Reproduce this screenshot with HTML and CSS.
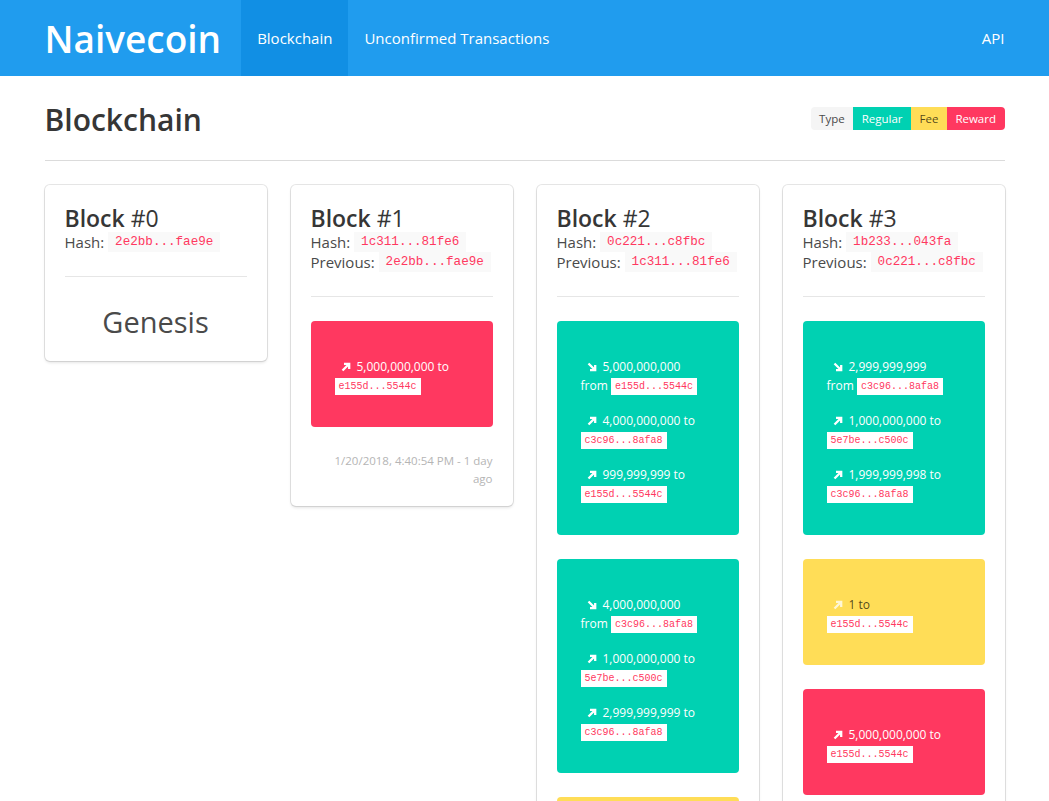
FILE: index.html
```html
<!DOCTYPE html>
<html lang="en">
<head>
<meta charset="utf-8">
<title>Naivecoin</title>
<link rel="stylesheet" href="styles.css">
</head>
<body>
<nav class="navbar">
  <div class="container nav-inner">
    <a class="brand">Naivecoin</a>
    <a class="nav-item active">Blockchain</a>
    <a class="nav-item">Unconfirmed Transactions</a>
    <a class="nav-item nav-end">API</a>
  </div>
</nav>

<main class="container">
  <div class="page-head">
    <h1 class="page-title">Blockchain</h1>
    <div class="tags">
      <span class="tag tag-type">Type</span>
      <span class="tag tag-regular">Regular</span>
      <span class="tag tag-fee">Fee</span>
      <span class="tag tag-reward">Reward</span>
    </div>
  </div>
  <hr class="page-rule">

  <div class="chain">
    <!-- Block 0 -->
    <div class="card">
      <h2 class="block-title">Block <span class="num">#0</span></h2>
      <div class="meta">Hash: <code class="hash">2e2bb...fae9e</code></div>
      <hr class="card-rule">
      <div class="genesis">Genesis</div>
    </div>

    <!-- Block 1 -->
    <div class="card">
      <h2 class="block-title">Block <span class="num">#1</span></h2>
      <div class="meta">Hash: <code class="hash">1c311...81fe6</code></div>
      <div class="meta">Previous: <code class="hash">2e2bb...fae9e</code></div>
      <hr class="card-rule">
      <div class="tx-box reward">
        <div class="tx">
          <div class="tx-line"><svg class="arrow" viewBox="0 0 10 10"><path d="M1.5 8.5 7.5 2.5M3 1.8H8.2V7"/></svg>5,000,000,000 to</div>
          <div class="tx-line"><code class="addr">e155d...5544c</code></div>
        </div>
      </div>
      <div class="stamp">1/20/2018, 4:40:54 PM - 1 day<br>ago</div>
    </div>

    <!-- Block 2 -->
    <div class="card">
      <h2 class="block-title">Block <span class="num">#2</span></h2>
      <div class="meta">Hash: <code class="hash">0c221...c8fbc</code></div>
      <div class="meta">Previous: <code class="hash">1c311...81fe6</code></div>
      <hr class="card-rule">
      <div class="tx-box regular">
        <div class="tx">
          <div class="tx-line"><svg class="arrow" viewBox="0 0 10 10"><path d="M1.5 1.5 7.5 7.5M8.2 3V8.2H3"/></svg>5,000,000,000</div>
          <div class="tx-line">from <code class="addr">e155d...5544c</code></div>
        </div>
        <div class="tx">
          <div class="tx-line"><svg class="arrow" viewBox="0 0 10 10"><path d="M1.5 8.5 7.5 2.5M3 1.8H8.2V7"/></svg>4,000,000,000 to</div>
          <div class="tx-line"><code class="addr">c3c96...8afa8</code></div>
        </div>
        <div class="tx">
          <div class="tx-line"><svg class="arrow" viewBox="0 0 10 10"><path d="M1.5 8.5 7.5 2.5M3 1.8H8.2V7"/></svg>999,999,999 to</div>
          <div class="tx-line"><code class="addr">e155d...5544c</code></div>
        </div>
      </div>
      <div class="tx-box regular">
        <div class="tx">
          <div class="tx-line"><svg class="arrow" viewBox="0 0 10 10"><path d="M1.5 1.5 7.5 7.5M8.2 3V8.2H3"/></svg>4,000,000,000</div>
          <div class="tx-line">from <code class="addr">c3c96...8afa8</code></div>
        </div>
        <div class="tx">
          <div class="tx-line"><svg class="arrow" viewBox="0 0 10 10"><path d="M1.5 8.5 7.5 2.5M3 1.8H8.2V7"/></svg>1,000,000,000 to</div>
          <div class="tx-line"><code class="addr">5e7be...c500c</code></div>
        </div>
        <div class="tx">
          <div class="tx-line"><svg class="arrow" viewBox="0 0 10 10"><path d="M1.5 8.5 7.5 2.5M3 1.8H8.2V7"/></svg>2,999,999,999 to</div>
          <div class="tx-line"><code class="addr">c3c96...8afa8</code></div>
        </div>
      </div>
      <div class="tx-box fee">
        <div class="tx">
          <div class="tx-line"><svg class="arrow" viewBox="0 0 10 10"><path d="M1.5 8.5 7.5 2.5M3 1.8H8.2V7"/></svg>1 to</div>
          <div class="tx-line"><code class="addr">e155d...5544c</code></div>
        </div>
      </div>
      <div class="tx-box reward">
        <div class="tx">
          <div class="tx-line"><svg class="arrow" viewBox="0 0 10 10"><path d="M1.5 8.5 7.5 2.5M3 1.8H8.2V7"/></svg>5,000,000,000 to</div>
          <div class="tx-line"><code class="addr">e155d...5544c</code></div>
        </div>
      </div>
      <div class="stamp">1/20/2018, 4:41:26 PM - 1 day<br>ago</div>
    </div>

    <!-- Block 3 -->
    <div class="card">
      <h2 class="block-title">Block <span class="num">#3</span></h2>
      <div class="meta">Hash: <code class="hash">1b233...043fa</code></div>
      <div class="meta">Previous: <code class="hash">0c221...c8fbc</code></div>
      <hr class="card-rule">
      <div class="tx-box regular">
        <div class="tx">
          <div class="tx-line"><svg class="arrow" viewBox="0 0 10 10"><path d="M1.5 1.5 7.5 7.5M8.2 3V8.2H3"/></svg>2,999,999,999</div>
          <div class="tx-line">from <code class="addr">c3c96...8afa8</code></div>
        </div>
        <div class="tx">
          <div class="tx-line"><svg class="arrow" viewBox="0 0 10 10"><path d="M1.5 8.5 7.5 2.5M3 1.8H8.2V7"/></svg>1,000,000,000 to</div>
          <div class="tx-line"><code class="addr">5e7be...c500c</code></div>
        </div>
        <div class="tx">
          <div class="tx-line"><svg class="arrow" viewBox="0 0 10 10"><path d="M1.5 8.5 7.5 2.5M3 1.8H8.2V7"/></svg>1,999,999,998 to</div>
          <div class="tx-line"><code class="addr">c3c96...8afa8</code></div>
        </div>
      </div>
      <div class="tx-box fee">
        <div class="tx">
          <div class="tx-line"><svg class="arrow" viewBox="0 0 10 10"><path d="M1.5 8.5 7.5 2.5M3 1.8H8.2V7"/></svg>1 to</div>
          <div class="tx-line"><code class="addr">e155d...5544c</code></div>
        </div>
      </div>
      <div class="tx-box reward">
        <div class="tx">
          <div class="tx-line"><svg class="arrow" viewBox="0 0 10 10"><path d="M1.5 8.5 7.5 2.5M3 1.8H8.2V7"/></svg>5,000,000,000 to</div>
          <div class="tx-line"><code class="addr">e155d...5544c</code></div>
        </div>
      </div>
      <div class="stamp">1/20/2018, 4:42:03 PM - 1 day<br>ago</div>
    </div>
  </div>
</main>
</body>
</html>
```

FILE: styles.css
```css
* { box-sizing: border-box; }

body {
  margin: 0;
  font-family: "Open Sans", "Noto Sans", "Liberation Sans", sans-serif;
  color: #4a4a4a;
  background: #fff;
}

.container {
  width: 960px;
  margin: 0 auto;
}

/* ---------- navbar ---------- */
.navbar {
  background: #209cee;
  height: 76px;
}
.nav-inner {
  display: flex;
  align-items: stretch;
  height: 100%;
}
.brand {
  display: flex;
  align-items: center;
  font-size: 37px;
  font-weight: 600;
  color: #fff;
  margin-right: 20px;
}
.nav-item {
  display: flex;
  align-items: center;
  padding: 0 16px;
  font-size: 15px;
  color: #fff;
}
.nav-item.active {
  background: #118fe4;
}
.nav-end {
  margin-left: auto;
  padding-right: 0;
}

/* ---------- page heading ---------- */
.page-head {
  display: flex;
  align-items: center;
  justify-content: space-between;
  padding-top: 26px;
}
.page-title {
  margin: 0;
  font-size: 30px;
  line-height: 36px;
  font-weight: 600;
  color: #363636;
}
.tags {
  display: flex;
  margin-top: -3px;
}
.tag {
  display: inline-flex;
  align-items: center;
  height: 23px;
  padding: 0 8.5px;
  font-size: 11.5px;
  color: #fff;
}
.tag-type {
  background: #f5f5f5;
  color: #4a4a4a;
  border-radius: 4px 0 0 4px;
}
.tag-regular { background: #00d1b2; }
.tag-fee { background: #ffdd57; color: rgba(0,0,0,.7); }
.tag-reward { background: #ff3860; border-radius: 0 4px 4px 0; }

.page-rule {
  border: 0;
  border-top: 1px solid #dbdbdb;
  margin: 22px 0 24px;
}

/* ---------- chain ---------- */
.chain {
  display: grid;
  grid-template-columns: repeat(4, 222px);
  gap: 24px;
  align-items: start;
}
.card {
  background: #fff;
  border-radius: 5px;
  box-shadow: 0 2px 3px rgba(10,10,10,.1), 0 0 0 1px rgba(10,10,10,.1);
  padding: 20px 20px 18px;
}
.block-title {
  margin: 0;
  font-size: 23px;
  line-height: 27px;
  font-weight: 600;
  color: #363636;
}
.block-title .num {
  font-weight: 500;
}
.meta {
  font-size: 15px;
  line-height: 20px;
  height: 20px;
  color: #4a4a4a;
}
.hash {
  display: inline-block;
  vertical-align: top;
  font-family: "Liberation Mono", "DejaVu Sans Mono", monospace;
  font-size: 12.6px;
  line-height: 20px;
  padding: 0 7px;
  background: #f9f9f9;
  color: #ff3860;
}
.card-rule {
  border: 0;
  border-top: 1px solid #e6e6e6;
  margin: 24px 0 24px;
}
.genesis {
  text-align: center;
  font-size: 29px;
  line-height: 36px;
  padding: 3px 0 3px;
  color: #4a4a4a;
}

/* ---------- transactions ---------- */
.tx-box {
  border-radius: 4px;
  padding: 28px 20px 24px 24px;
  margin-bottom: 24px;
  color: #fff;
  font-size: 12px;
}
.tx-box.regular { background: #00d1b2; }
.tx-box.fee { background: #ffdd57; color: rgba(0,0,0,.7); }
.tx-box.reward { background: #ff3860; }
.tx {
  padding: 8px 0;
}
.tx-line {
  height: 19px;
  line-height: 19px;
  white-space: nowrap;
}
.arrow {
  width: 10px;
  height: 10px;
  margin: 0 6px 0 6px;
  vertical-align: -0.5px;
  fill: none;
  stroke: #fff;
  stroke-width: 2.3;
  stroke-linecap: butt;
}
.tx-box.fee .arrow { stroke: rgba(255,255,255,.75); }
.addr {
  display: inline-block;
  vertical-align: top;
  margin-top: 2px;
  font-family: "Liberation Mono", "DejaVu Sans Mono", monospace;
  font-size: 10px;
  line-height: 17px;
  padding: 0 4px;
  background: #fff;
  color: #ff3860;
}
.stamp {
  text-align: right;
  font-size: 11.5px;
  line-height: 18px;
  color: #b5b5b5;
  margin-top: 25px;
}
```
